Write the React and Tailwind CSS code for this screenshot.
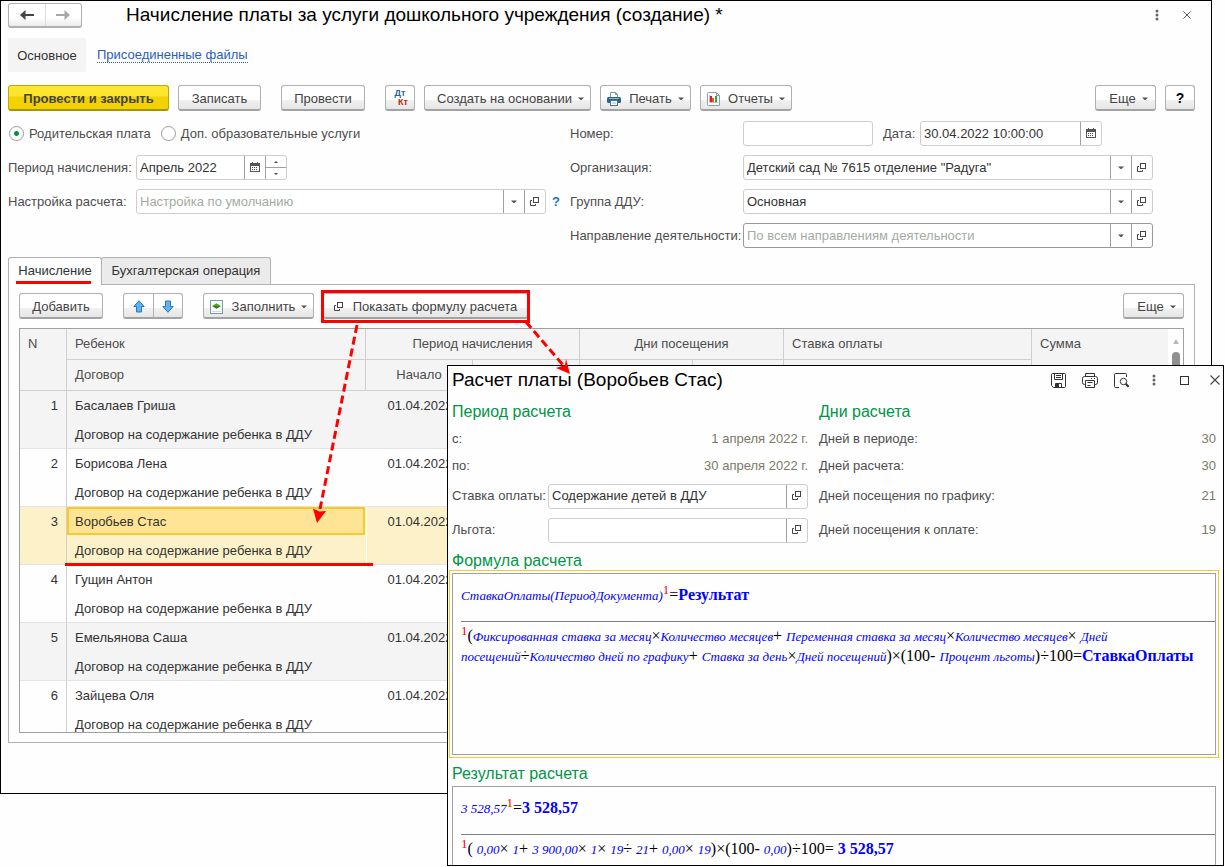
import React from "react";

const BTN =
  "flex h-[26px] shrink-0 items-center justify-center rounded-[3px] border border-b-2 border-[#b0b0b0] border-b-[#a3a3a3] bg-linear-to-b from-white from-60% via-[#f1f1f1] via-60% to-[#e6e6e6] pt-[2px] text-[#444]";
const FIELD = "flex h-[25px] items-stretch rounded-[3px] border bg-white";
const INPUT =
  "min-w-0 flex-1 rounded-[3px] bg-transparent px-[3px] text-[#333] outline-none placeholder:text-[#a3aca3]";
const SIDE = "flex w-[21px] shrink-0 items-center justify-center border-l border-[#a0a0a0]";

function Caret({ className = "" }) {
  return (
    <svg width="6" height="4" viewBox="0 0 6 4" fill="#555" className={className} aria-hidden="true">
      <path d="M0 0.500h6L3.500 3h-1z" />
    </svg>
  );
}

function OpenIcon() {
  return (
    <svg width="10" height="10" viewBox="0 0 10 10" fill="none" stroke="#444" aria-hidden="true">
      <rect x="3.5" y="0.5" width="5" height="5" />
      <path d="M2 3.5H0.5v5h5V7" />
    </svg>
  );
}

function CalendarIcon() {
  return (
    <svg width="10" height="11" viewBox="0 0 10 11" shapeRendering="crispEdges" aria-hidden="true">
      <path d="M0 1h2V0h1v1h4V0h1v1h2v9H0z" fill="#555" />
      <path d="M1 4h8v5H1z" fill="#fff" />
      <path d="M2 5h1v1H2zM4 5h1v1H4zM6 5h1v1H6zM2 7h1v1H2zM4 7h1v1H4zM6 7h1v1H6z" fill="#444" />
    </svg>
  );
}

function Dots() {
  return (
    <svg width="4" height="12" viewBox="0 0 4 12" fill="#666" aria-hidden="true">
      <circle cx="2" cy="2" r="1.5" />
      <circle cx="2" cy="6" r="1.5" />
      <circle cx="2" cy="10" r="1.5" />
    </svg>
  );
}

function Cross({ size }) {
  return (
    <svg width={size} height={size} viewBox="0 0 10 10" stroke="#444" strokeWidth="1.1" aria-hidden="true">
      <path d="M0.5 0.5l9 9M9.5 0.5l-9 9" />
    </svg>
  );
}

function NavArrow({ color, flip }) {
  return (
    <svg width="14" height="10" viewBox="0 0 14 10" fill={color} aria-hidden="true" className={flip ? "rotate-180" : ""}>
      <path d="M5.500 0v4H14v2H5.500v4L0 5z" />
    </svg>
  );
}

function MoveArrow({ down }) {
  return (
    <svg width="12" height="13" viewBox="0 0 12 13" aria-hidden="true" className={down ? "rotate-180" : ""}>
      <path d="M6 0.7L11.2 6.5H8.500v5.500h-5V6.5H0.8z" fill="#5fb2f5" stroke="#2b77b5" strokeLinejoin="round" />
    </svg>
  );
}

function PrinterColorIcon() {
  return (
    <svg width="14" height="14" viewBox="0 0 14 14" aria-hidden="true">
      <path d="M3.5 5V0.5h5l2 2V5" fill="#fff" stroke="#7993a6" />
      <path d="M8.5 0.5v2h2" fill="none" stroke="#7993a6" />
      <rect x="0" y="5" width="14" height="6" rx="1.5" fill="#2f6288" />
      <path d="M2 6.5h10" stroke="#8fb4cf" />
      <rect x="3.5" y="8.5" width="7" height="5" fill="#fff" stroke="#4d7590" />
      <path d="M5 11h4" stroke="#9fb6c6" />
    </svg>
  );
}

function ReportIcon() {
  return (
    <svg width="13" height="14" viewBox="0 0 13 14" aria-hidden="true">
      <path d="M1.5 0.5h8l3 3v10h-11a1 1 0 0 1-1-1v-11a1 1 0 0 1 1-1z" fill="#fff" stroke="#8aa0b0" />
      <path d="M9.5 0.5v3h3" fill="none" stroke="#8aa0b0" />
      <path d="M2.5 3v7.5H11" fill="none" stroke="#b4c2cc" />
      <path d="M3 4h2v6H3z" fill="#e02020" />
      <path d="M5 6h2v4H5z" fill="#f0502a" />
      <path d="M8 4h2v6H8z" fill="#1eb035" />
    </svg>
  );
}

function FillIcon() {
  return (
    <svg width="13" height="14" viewBox="0 0 13 14" aria-hidden="true">
      <rect x="0.5" y="0.5" width="12" height="13" fill="#f7fafc" stroke="#7f98a8" />
      <path d="M2 11.5h9" stroke="#cfdae2" />
      <path d="M6.5 3.2L11 6H2z" fill="#55a630" />
      <path d="M2 6h9L6.5 8.8z" fill="#2f7d1c" />
    </svg>
  );
}

function PostingsIcon() {
  return (
    <span className="flex flex-col pb-[2px] text-[9px] leading-[9px] font-bold">
      <span className="text-[#2d6299]">Дт</span>
      <span className="pl-[6px] text-[#bd1e12]">Кт</span>
    </span>
  );
}

function SaveIcon() {
  return (
    <svg width="15" height="15" viewBox="0 0 15 15" fill="none" stroke="#333" aria-hidden="true">
      <path d="M0.5 1.5a1 1 0 0 1 1-1h12a1 1 0 0 1 1 1v12a1 1 0 0 1-1 1h-11l-2-2z" />
      <path d="M3.5 0.5v6h8v-6M5 2.5h5M5 4.5h5M4.5 14.5v-4h6v4" />
      <path d="M5 11h3v3H5z" fill="#333" stroke="none" />
    </svg>
  );
}

function PrinterIcon() {
  return (
    <svg width="16" height="15" viewBox="0 0 16 15" fill="none" stroke="#333" aria-hidden="true">
      <path d="M3.5 3.5v-3h9v3" />
      <path d="M3.5 11.5h-1a2 2 0 0 1-2-2v-4a2 2 0 0 1 2-2h11a2 2 0 0 1 2 2v4a2 2 0 0 1-2 2h-1" />
      <path d="M3.5 7.5h9v7h-9zM5.5 9.5h5M5.5 12.5h3M9 5.5h1M12 5.5h1" />
    </svg>
  );
}

function PreviewIcon() {
  return (
    <svg width="15" height="15" viewBox="0 0 15 15" fill="none" stroke="#333" aria-hidden="true">
      <path d="M5 14.5H1.5a1 1 0 0 1-1-1v-12a1 1 0 0 1 1-1h10a1 1 0 0 1 1 1V4" />
      <circle cx="9.5" cy="8.5" r="3.2" />
      <path d="M11.7 10.8l2.8 3" strokeWidth="2" />
    </svg>
  );
}

function PickerField({ id, value, placeholder, dropdown = true, border = "border-[#cdcdcd]" }) {
  return (
    <div className={`${FIELD} ${border} min-w-0 flex-1`}>
      <input id={id} className={INPUT} defaultValue={value} placeholder={placeholder} />
      {dropdown && (
        <button className={SIDE} aria-label="Выбрать">
          <Caret />
        </button>
      )}
      <button className={SIDE} aria-label="Открыть">
        <OpenIcon />
      </button>
    </div>
  );
}

const CHILDREN = [
  "Басалаев Гриша",
  "Борисова Лена",
  "Воробьев Стас",
  "Гущин Антон",
  "Емельянова Саша",
  "Зайцева Оля",
];

function ChildRow({ n, name }) {
  const selected = n === 3;
  const bg = selected ? "bg-[#fdf1c9]" : n % 2 ? "bg-[#f4f4f4]" : "bg-[#fefefe]";
  return (
    <tr className={`h-[58px] ${bg}`}>
      <td className="border-r border-b border-[#e3e3e3] border-r-[#cfcfcf] pt-[7px] pr-2 text-right align-top leading-4">{n}</td>
      <td className="border-b border-[#e3e3e3] p-0 align-top">
        <div className={`mr-px h-[28px] border-2 pl-[6px] leading-[26px] ${selected ? "border-[#fbc926] bg-[#fee494]" : "border-transparent"}`}>{name}</div>
        <div className="h-[29px] pl-2 leading-8 whitespace-nowrap">Договор на содержание ребенка в ДДУ</div>
      </td>
      <td className={`border-b border-l border-b-[#e3e3e3] pt-[7px] text-center align-top leading-4 ${selected ? "border-l-white" : "border-l-transparent"}`}>
        01.04.2022
      </td>
      <td className="border-b border-[#e3e3e3]" />
      <td className="border-b border-[#e3e3e3]" />
      <td className="border-b border-[#e3e3e3]" />
      <td className="border-b border-[#e3e3e3]" />
      <td className="border-b border-[#e3e3e3]" />
    </tr>
  );
}

const TH = "border-r border-b border-[#cfcfcf] font-normal whitespace-nowrap";

function ChildrenTable() {
  return (
    <div className="mt-[9px] flex h-[405px] overflow-hidden border border-[#a0a0a0]">
      <div className="min-w-0 flex-1 overflow-hidden">
        <table className="w-full table-fixed border-separate border-spacing-0 text-[#333]">
          <colgroup>
            <col className="w-[47px]" />
            <col className="w-[299px]" />
            <col className="w-[107px]" />
            <col className="w-[107px]" />
            <col className="w-[113px]" />
            <col className="w-[91px]" />
            <col className="w-[248px]" />
            <col />
          </colgroup>
          <thead className="bg-[#f4f4f4] text-[#4d4d4d]">
            <tr className="h-[31px]">
              <th rowSpan={2} className={`${TH} pt-[7px] pl-2 text-left align-top leading-4`}>N</th>
              <th className={`${TH} pl-2 text-left`}>Ребенок</th>
              <th colSpan={2} className={`${TH} text-center`}>Период начисления</th>
              <th colSpan={2} className={`${TH} text-center`}>Дни посещения</th>
              <th className={`${TH} pl-2 text-left`}>Ставка оплаты</th>
              <th rowSpan={2} className="border-b border-[#cfcfcf] pt-[7px] pl-2 text-left align-top leading-4 font-normal">Сумма</th>
            </tr>
            <tr className="h-[31px]">
              <th className={`${TH} pl-2 text-left`}>Договор</th>
              <th className={`${TH} text-center`}>Начало</th>
              <th className={TH} />
              <th className={TH} />
              <th className={TH} />
              <th className={TH} />
            </tr>
          </thead>
          <tbody>
            {CHILDREN.map((name, i) => (
              <ChildRow key={name} n={i + 1} name={name} />
            ))}
          </tbody>
        </table>
      </div>
      <div className="flex w-[15px] flex-col items-center bg-white pt-[10px]">
        <svg width="6" height="5" viewBox="0 0 6 5" fill="#b9b9b9" aria-hidden="true">
          <path d="M3 0l3 5H0z" />
        </svg>
        <div className="mt-2 h-[120px] w-2 rounded-full bg-[#8f8f8f]" />
      </div>
    </div>
  );
}

const RADIO =
  "size-[15px] appearance-none rounded-full border border-[#9a9a9a] bg-white checked:bg-[radial-gradient(circle,#00953f_2px,white_3px)]";

function MainWindow() {
  return (
    <main className="mr-[13px] border border-black bg-[#fefefe] pr-4 pb-[50px] pl-[7px]">
      <header className="flex h-7 items-center">
        <div className="flex h-[25px] w-[74px] rounded-[3px] border border-b-2 border-[#b0b0b0] bg-linear-to-b from-white from-60% to-[#ececec]">
          <button aria-label="Назад" className="flex flex-1 items-center justify-center">
            <NavArrow color="#444" />
          </button>
          <button aria-label="Вперед" className="flex flex-1 items-center justify-center border-l border-[#dcdcdc]">
            <NavArrow color="#a8a8a8" flip />
          </button>
        </div>
        <h1 className="ml-11 flex-1 text-[19px] whitespace-nowrap text-black">
          Начисление платы за услуги дошкольного учреждения (создание) *
        </h1>
        <div className="flex items-center gap-6 pr-1">
          <button aria-label="Меню окна"><Dots /></button>
          <button aria-label="Закрыть"><Cross size={8} /></button>
        </div>
      </header>

      <nav className="mt-[9px] flex h-[34px] items-center">
        <a href="#main" className="flex h-full w-[78px] items-center justify-center rounded-[2px] bg-[#f4f4f4] pt-px text-[#333]">Основное</a>
        <a href="#files" className="ml-[11px] border-b border-dotted border-[#2a5db8] pt-px leading-[14px] text-[#2a5db8]">Присоединенные файлы</a>
      </nav>

      <div className="mt-[13px] flex items-center gap-[9px]">
        <button className="flex h-[26px] w-[161px] items-center justify-center rounded-[3px] border border-b-2 border-[#bfa80a] border-b-[#a8930a] bg-linear-to-b from-[#ffe62e] from-40% to-[#f2d200] to-50% pt-[2px] font-bold text-[#444]">
          Провести и закрыть
        </button>
        <button className={`${BTN} w-[83px]`}>Записать</button>
        <button className={`${BTN} ml-[11px] w-[84px]`}>Провести</button>
        <button className={`${BTN} ml-[11px] w-[30px]`}><PostingsIcon /></button>
        <button className={`${BTN} w-[167px] pl-[6px]`}>Создать на основании<Caret className="ml-[6px]" /></button>
        <button className={`${BTN} w-[91px]`}><PrinterColorIcon /><span className="ml-2">Печать</span><Caret className="ml-[6px]" /></button>
        <button className={`${BTN} w-[92px]`}><ReportIcon /><span className="ml-2">Отчеты</span><Caret className="ml-[6px]" /></button>
        <button className={`${BTN} ml-auto w-[61px] pl-[6px]`}>Еще<Caret className="ml-[6px]" /></button>
        <button className={`${BTN} w-[30px] text-[14px] font-bold text-black`}>?</button>
      </div>

      <div className="mt-[10px] mr-[42px] grid grid-cols-[562fr_583fr] text-[#4d4d4d]">
        <div className="flex min-w-0 flex-col gap-[9px]">
          <div className="flex h-[25px] items-center">
            <label className="flex items-center gap-[5px] pl-px">
              <input type="radio" name="kind" defaultChecked className={RADIO} />
              Родительская плата
            </label>
            <label className="ml-[10px] flex items-center gap-[5px]">
              <input type="radio" name="kind" className={RADIO} />
              Доп. образовательные услуги
            </label>
          </div>
          <div className="flex items-center">
            <label htmlFor="period" className="w-32">Период начисления:</label>
            <div className={`${FIELD} w-[151px] border-[#cdcdcd]`}>
              <input id="period" className={INPUT} defaultValue="Апрель 2022" />
              <button className={SIDE} aria-label="Календарь"><CalendarIcon /></button>
              <div className="flex w-[21px] flex-col border-l border-[#a0a0a0]">
                <button aria-label="Больше" className="flex flex-1 items-center justify-center border-b border-[#a0a0a0]">
                  <svg width="4" height="2" viewBox="0 0 4 2" fill="#444" aria-hidden="true"><path d="M2 0l2 2H0z" /></svg>
                </button>
                <button aria-label="Меньше" className="flex flex-1 items-center justify-center">
                  <svg width="4" height="2" viewBox="0 0 4 2" fill="#444" aria-hidden="true"><path d="M0 0h4L2 2z" /></svg>
                </button>
              </div>
            </div>
          </div>
          <div className="flex items-center">
            <label htmlFor="settings" className="w-32">Настройка расчета:</label>
            <PickerField id="settings" placeholder="Настройка по умолчанию" />
            <button className="w-6 pr-1 text-center font-bold text-[#1a76bd]">?</button>
          </div>
        </div>

        <div className="flex min-w-0 flex-col gap-[9px]">
          <div className="flex items-center">
            <label htmlFor="number" className="w-[173px]">Номер:</label>
            <div className={`${FIELD} w-[130px] border-[#cdcdcd]`}>
              <input id="number" className={INPUT} />
            </div>
            <label htmlFor="date" className="w-[47px] pl-[10px]">Дата:</label>
            <div className={`${FIELD} w-[182px] border-[#cdcdcd]`}>
              <input id="date" className={INPUT} defaultValue="30.04.2022 10:00:00" />
              <button className={SIDE} aria-label="Календарь"><CalendarIcon /></button>
            </div>
          </div>
          <div className="flex items-center">
            <label htmlFor="org" className="w-[173px]">Организация:</label>
            <PickerField id="org" value={'Детский сад № 7615 отделение "Радуга"'} />
          </div>
          <div className="flex items-center">
            <label htmlFor="group" className="w-[173px]">Группа ДДУ:</label>
            <PickerField id="group" value="Основная" />
          </div>
          <div className="flex items-center">
            <label htmlFor="direction" className="w-[173px] whitespace-nowrap">Направление деятельности:</label>
            <PickerField id="direction" placeholder="По всем направлениям деятельности" border="border-[#999]" />
          </div>
        </div>
      </div>

      <div className="relative mt-[9px] flex">
        <button className="-mb-px h-[28px] w-[94px] rounded-t-[3px] border border-b-0 border-[#b2b2b2] bg-[#fefefe] pb-[2px] text-[#333]">Начисление</button>
        <button className="-ml-px h-[27px] w-[170px] rounded-t-[3px] border border-b-0 border-[#b2b2b2] bg-[#ebebeb] text-[#333]">Бухгалтерская операция</button>
      </div>
      <section className="border border-[#b2b2b2] px-[10px] pt-2 pb-[9px]">
        <div className="flex items-center">
          <button className={`${BTN} w-[84px]`}>Добавить</button>
          <button aria-label="Вверх" className={`${BTN} ml-5 w-[31px] rounded-r-none`}><MoveArrow /></button>
          <button aria-label="Вниз" className={`${BTN} -ml-px w-[30px] rounded-l-none`}><MoveArrow down /></button>
          <button className={`${BTN} ml-5 w-[111px]`}><FillIcon /><span className="ml-[9px]">Заполнить</span><Caret className="ml-[6px]" /></button>
          <button className={`${BTN} ml-[9px] w-[205px]`}><OpenIcon /><span className="ml-[9px]">Показать формулу расчета</span></button>
          <button className={`${BTN} ml-auto w-[61px] pl-[6px]`}>Еще<Caret className="ml-[6px]" /></button>
        </div>
        <ChildrenTable />
      </section>
    </main>
  );
}

function Var({ children }) {
  return <i className="text-[13px] leading-none text-[#0000ff]">{children}</i>;
}
function Note() {
  return <span className="relative -top-[6px] text-[13px] leading-none text-[#ff0000]">1</span>;
}
function Res({ children }) {
  return <b className="text-[16px] leading-none text-[#0000ff]">{children}</b>;
}

function InfoRow({ label, value, tall }) {
  return (
    <div className={`flex items-center justify-between ${tall ? "h-[34px]" : "h-[27px]"}`}>
      <span>{label}</span>
      <span className="text-[#7c7a66]">{value}</span>
    </div>
  );
}

const HEADING = "pt-px text-[16px] leading-6 text-[#009646]";

function FormulaWindow() {
  return (
    <section className="absolute top-[365px] right-[1px] left-[447px] border border-black bg-[#fefefe] pr-[7px] pl-1 text-[#4d4d4d]">
      <header className="flex h-7 items-center">
        <h2 className="flex-1 text-[19px] whitespace-nowrap text-black">Расчет платы (Воробьев Стас)</h2>
        <div className="-mr-1 flex items-center">
          <button aria-label="Сохранить"><SaveIcon /></button>
          <button aria-label="Печать" className="ml-4"><PrinterIcon /></button>
          <button aria-label="Просмотр" className="ml-4"><PreviewIcon /></button>
          <button aria-label="Меню окна" className="ml-[23px]"><Dots /></button>
          <button aria-label="Развернуть" className="ml-6">
            <svg width="9" height="9" viewBox="0 0 9 9" fill="none" stroke="#333" aria-hidden="true"><rect x="0.5" y="0.5" width="8" height="8" /></svg>
          </button>
          <button aria-label="Закрыть" className="ml-[21px]"><Cross size={10} /></button>
        </div>
      </header>

      <div className="mt-[5px] grid grid-cols-[356fr_397fr] gap-x-[11px]">
        <div className="min-w-0">
          <h3 className={HEADING}>Период расчета</h3>
          <div className="pt-px">
            <InfoRow label="с:" value="1 апреля 2022 г." />
            <InfoRow label="по:" value="30 апреля 2022 г." />
            <div className="flex h-[34px] items-center">
              <label htmlFor="rate" className="w-24 whitespace-nowrap">Ставка оплаты:</label>
              <PickerField id="rate" value="Содержание детей в ДДУ" dropdown={false} />
            </div>
            <div className="flex h-[34px] items-center">
              <label htmlFor="benefit" className="w-24">Льгота:</label>
              <PickerField id="benefit" dropdown={false} />
            </div>
          </div>
        </div>
        <div className="min-w-0">
          <h3 className={HEADING}>Дни расчета</h3>
          <div className="pt-px">
            <InfoRow label="Дней в периоде:" value="30" />
            <InfoRow label="Дней расчета:" value="30" />
            <InfoRow label="Дней посещения по графику:" value="21" tall />
            <InfoRow label="Дней посещения к оплате:" value="19" tall />
          </div>
        </div>
      </div>

      <h3 className={`${HEADING} mt-px`}>Формула расчета</h3>
      <div className="h-[182px] border border-[#a0a0a0] pt-[11px] pl-2 font-['Liberation_Serif',serif] text-[16px] leading-5 text-black outline outline-offset-2 outline-[#f7c925]">
        <p><Var>СтавкаОплаты(ПериодДокумента)</Var><Note />=<Res>Результат</Res></p>
        <hr className="mt-4 mb-1 border-[#808080]" />
        <p><Note />(<Var>Фиксированная ставка за месяц</Var>×<Var>Количество месяцев</Var>+ <Var>Переменная ставка за месяц</Var>×<Var>Количество месяцев</Var>× <Var>Дней</Var> <Var>посещений</Var>÷<Var>Количество дней по графику</Var>+ <Var>Ставка за день</Var>×<Var>Дней посещений</Var>)×(100- <Var>Процент льготы</Var>)÷100=<Res>СтавкаОплаты</Res></p>
      </div>

      <h3 className={`${HEADING} mt-[6px]`}>Результат расчета</h3>
      <div className="h-[79px] border border-b-0 border-[#a0a0a0] pt-[11px] pl-2 font-['Liberation_Serif',serif] text-[16px] leading-5 text-black">
        <p><Var>3 528,57</Var><Note />=<Res>3 528,57</Res></p>
        <hr className="mt-4 mb-1 border-[#808080]" />
        <p><Note />( <Var>0,00</Var>× <Var>1</Var>+ <Var>3 900,00</Var>× <Var>1</Var>× <Var>19</Var>÷ <Var>21</Var>+ <Var>0,00</Var>× <Var>19</Var>)×(100- <Var>0,00</Var>)÷100= <Res>3 528,57</Res></p>
      </div>
    </section>
  );
}

function Annotations() {
  return (
    <svg className="pointer-events-none absolute top-0 left-0" width="600" height="600" viewBox="0 0 600 600" fill="none" stroke="#fe0000" strokeWidth="3" aria-hidden="true">
      <path d="M16 282.5h75M65 564.5h308" />
      <rect x="322.5" y="291.5" width="206" height="30" />
      <path d="M357 325L320 509" strokeDasharray="8 4" />
      <path d="M526 322L563 365" strokeDasharray="8 4" />
      <path d="M317 523l-4-14.500 6.500 3 6.500-0.500z" fill="#fe0000" stroke="none" />
      <path d="M570 374l-14-6 9-3 1-6z" fill="#fe0000" stroke="none" />
    </svg>
  );
}

export default function App() {
  return (
    <div className="relative min-h-screen bg-[#fefefe] font-['Liberation_Sans',Arial,sans-serif] text-[13px]">
      <MainWindow />
      <FormulaWindow />
      <Annotations />
    </div>
  );
}
